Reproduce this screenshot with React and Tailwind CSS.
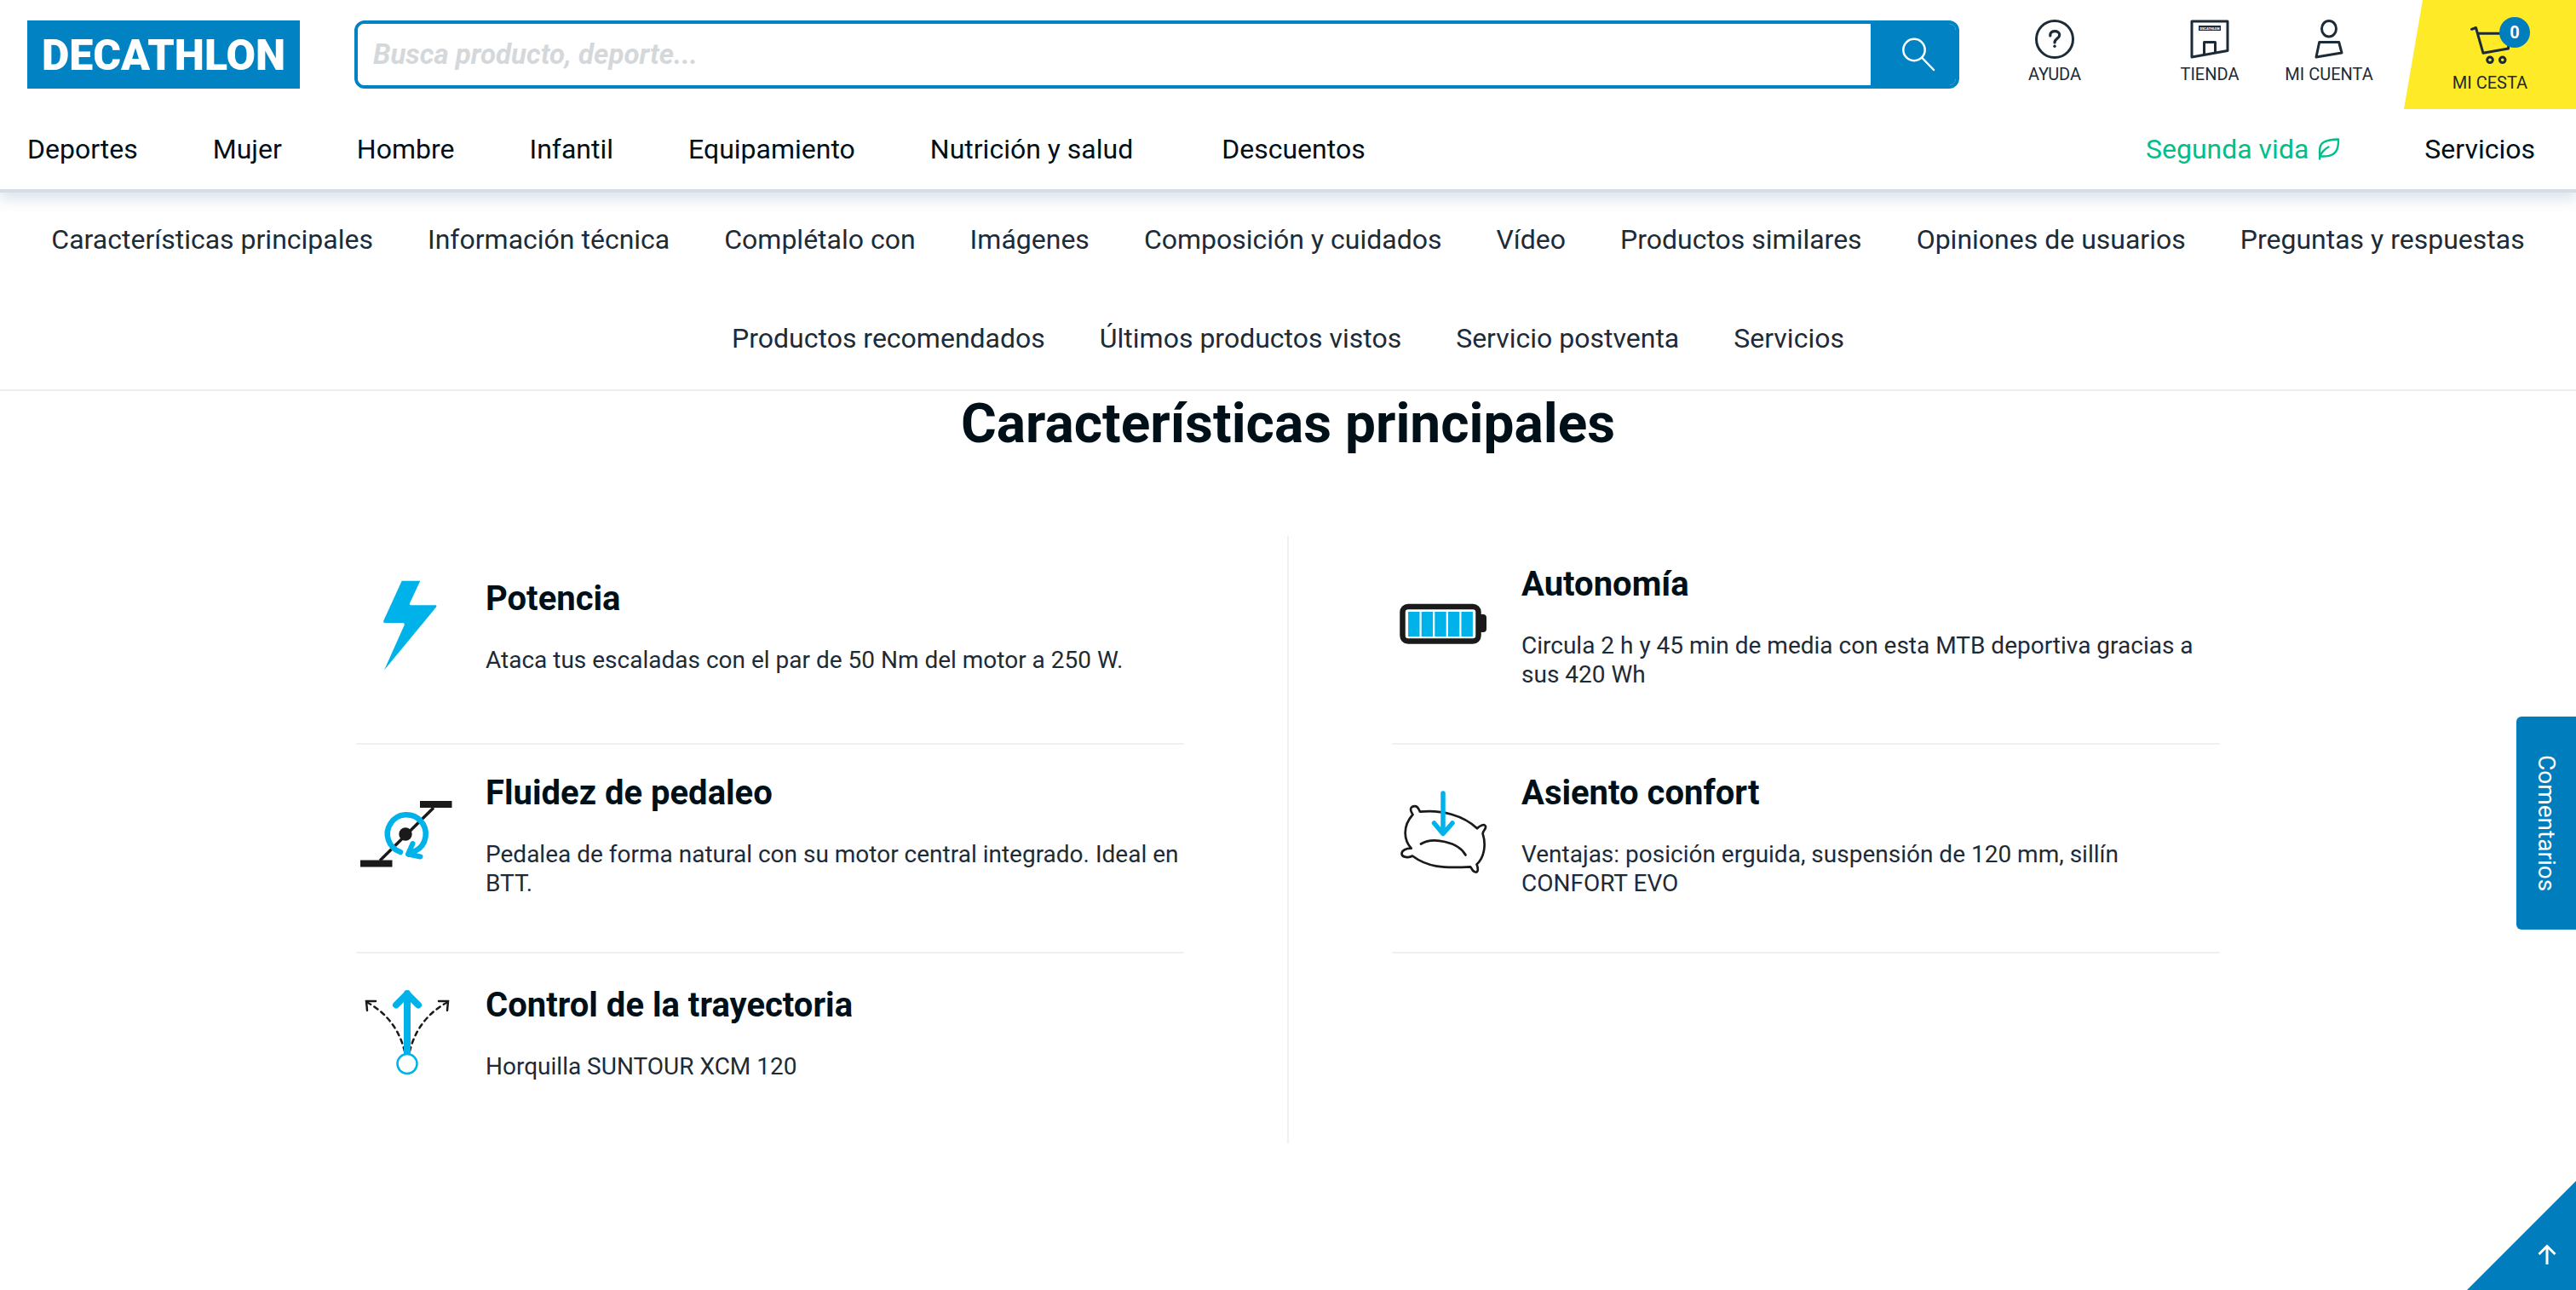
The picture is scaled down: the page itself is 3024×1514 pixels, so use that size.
import React from "react";

const BLUE = "#00b2ea";
const INK = "#1a1a1a";

const mainLinks = ["Deportes", "Mujer", "Hombre", "Infantil", "Equipamiento", "Nutrición y salud"];

const sectionLinks = [
  "Características principales",
  "Información técnica",
  "Complétalo con",
  "Imágenes",
  "Composición y cuidados",
  "Vídeo",
  "Productos similares",
  "Opiniones de usuarios",
  "Preguntas y respuestas",
  "Productos recomendados",
  "Últimos productos vistos",
  "Servicio postventa",
  "Servicios",
];

function HelpIcon() {
  return (
    <svg className="size-12" viewBox="0 0 48 48" fill="none" stroke="currentColor" strokeWidth="3" strokeLinecap="round" aria-hidden="true">
      <circle cx="24" cy="24" r="21.5" />
      <path d="M18.8 20v-1.2c0-5.6 10.9-5.6 10.9 0.2 0 4.5-5.7 4.2-5.7 9" strokeWidth="3.2" />
      <circle cx="24" cy="32.3" r="1.7" fill="currentColor" stroke="none" />
    </svg>
  );
}

function StoreIcon() {
  return (
    <svg className="size-12" viewBox="0 0 48 48" fill="none" stroke="currentColor" strokeWidth="3" strokeLinejoin="round" aria-hidden="true">
      <path d="M3 3h42v34.5L3 45z" />
      <path d="M17.5 42V27.5h13V39.5" />
      <rect x="11" y="8" width="26" height="6" fill="currentColor" stroke="none" />
      <text x="24" y="13" textAnchor="middle" fill="#fff" stroke="none" className="font-['Roboto',sans-serif] text-[4px] font-black">
        DECATHLON
      </text>
    </svg>
  );
}

function AccountIcon() {
  return (
    <svg className="size-12" viewBox="0 0 48 48" fill="none" stroke="currentColor" strokeWidth="3" strokeLinejoin="round" aria-hidden="true">
      <ellipse cx="24" cy="11.7" rx="8.5" ry="9.3" />
      <path d="M12.7 27.5h23L39 40 9 45z" />
    </svg>
  );
}

function CartIcon() {
  return (
    <svg className="size-12" viewBox="0 0 48 48" fill="none" stroke="currentColor" strokeWidth="3" strokeLinejoin="round" strokeLinecap="round" aria-hidden="true">
      <path d="M2.5 6.3l5-1.8L16 34.3 45.5 29 47 11.3H10" />
      <circle cx="24" cy="42.3" r="3.3" />
      <circle cx="38.7" cy="42.3" r="3.3" />
    </svg>
  );
}

function SearchIcon() {
  return (
    <svg className="size-10" viewBox="0 0 40 40" fill="none" stroke="currentColor" strokeWidth="2.5" strokeLinecap="round" aria-hidden="true">
      <circle cx="15" cy="14.5" r="12.7" />
      <path d="M24 23.5L38 38" />
    </svg>
  );
}

function LeafIcon() {
  return (
    <svg className="size-7" viewBox="0 0 28 28" fill="none" stroke="currentColor" strokeWidth="2.4" strokeLinecap="round" strokeLinejoin="round" aria-hidden="true">
      <path d="M3.2 25.5V15C3.2 6 10 3 25 2.5c.2 5-.2 10.5-3 14.5-3.5 4.8-9 5.5-18.5 5.5" />
      <path d="M3.5 22c2.5-5 5-8 10-10.5" />
    </svg>
  );
}

function BoltArt() {
  return (
    <svg className="size-[120px] shrink-0" viewBox="0 0 120 120" aria-hidden="true">
      <path
        d="M53.7 6.7H75.3L63 33q-1 2.2 1.5 2.2H93q2.2.3 1 2.3L33 111.5 56.5 59q1-3-1.5-3H33.5q-2-.3-1.2-2.5z"
        fill={BLUE}
      />
    </svg>
  );
}

function BatteryArt() {
  return (
    <svg className="size-[120px] shrink-0" viewBox="0 0 120 120" aria-hidden="true">
      <rect x="12.5" y="37" width="89" height="40.5" rx="6.5" fill="none" stroke={INK} strokeWidth="6.5" />
      <path d="M103 46h4q4 0 4 4v13q0 4-4 4h-4z" fill={INK} />
      {[19.1, 34.7, 50.3, 65.9, 81.5].map((x) => (
        <rect key={x} x={x} y="43" width="13.4" height="29" fill={BLUE} />
      ))}
    </svg>
  );
}

function CrankArt() {
  return (
    <svg className="size-[120px] shrink-0" viewBox="0 0 120 120" fill="none" aria-hidden="true">
      <path d="M91 28L28 90" stroke={INK} strokeWidth="3.5" />
      <path d="M75 20h37.5v8H75zM5 89.5h37.5v8H5z" fill={INK} />
      <path d="M52 80A22.5 22.5 0 1 1 70 78.5L62 82.5" stroke={BLUE} strokeWidth="6.5" strokeLinecap="round" strokeLinejoin="round" />
      <path d="M66.5 70L61 82.5 75.5 85.5" stroke={BLUE} strokeWidth="6" strokeLinecap="round" strokeLinejoin="round" />
      <circle cx="58" cy="59" r="7.7" fill={INK} />
    </svg>
  );
}

function CushionArt() {
  return (
    <svg className="size-[120px] shrink-0" viewBox="0 0 120 120" fill="none" strokeLinecap="round" strokeLinejoin="round" aria-hidden="true">
      <g stroke={INK} strokeWidth="2.7">
        <path d="M33 32.7C58 30 84 37 100 52.3C103 49 109 46 110 50C110.5 53 107 55 106.6 58.3C111 72 108 87 99.5 94.5C101 98 102 104 98 103.5C94 103 94 99 92 97.3C60 99 42 98 24 84.5C20 87 12 86.5 11.5 82C11.5 78 17 75.5 22.7 75.7C14 66 12 50 24.5 36C23 34 20.5 29 23.5 27C29 24.5 31 28 33 32.7Z" />
        <path d="M34 70.5C48 62 78 68 86.5 83.5" />
      </g>
      <path d="M60 11V58M49.5 46L60 58.5 71 46" stroke={BLUE} strokeWidth="5.5" />
    </svg>
  );
}

function TrajectoryArt() {
  return (
    <svg className="size-[120px] shrink-0" viewBox="0 0 120 120" fill="none" strokeLinecap="round" aria-hidden="true">
      <g stroke={INK} strokeWidth="2.5">
        <path d="M57 82C52 60 38 38 14 25M63 82C68 60 82 38 106 25" strokeDasharray="5 5" />
        <path d="M23 23H12L13 34M97 23H108L107 34" />
      </g>
      <path d="M60 14V86M47 27.5L60 14.5 73 27.5" stroke={BLUE} strokeWidth="8" strokeLinejoin="round" />
      <circle cx="60" cy="96.5" r="11.5" fill="#fff" stroke={BLUE} strokeWidth="2.5" />
    </svg>
  );
}

const features = [
  { art: BoltArt, title: "Potencia", text: "Ataca tus escaladas con el par de 50 Nm del motor a 250 W." },
  { art: BatteryArt, title: "Autonomía", text: "Circula 2 h y 45 min de media con esta MTB deportiva gracias a sus 420 Wh" },
  { art: CrankArt, title: "Fluidez de pedaleo", text: "Pedalea de forma natural con su motor central integrado. Ideal en BTT." },
  { art: CushionArt, title: "Asiento confort", text: "Ventajas: posición erguida, suspensión de 120 mm, sillín CONFORT EVO" },
  { art: TrajectoryArt, title: "Control de la trayectoria", text: "Horquilla SUNTOUR XCM 120", last: true },
];

function HeaderAction({ icon: Icon, label, className }) {
  return (
    <a href="#" className={"flex flex-col items-center gap-1 pt-[22px] text-[20px] leading-[26px] text-[#1d2b37] " + className}>
      <Icon />
      {label}
    </a>
  );
}

function Feature({ art: Art, title, text, last }) {
  return (
    <article className={"flex items-center gap-8 " + (last ? "pt-[33px] pb-16" : "border-b-2 border-[#f0f0f0] pt-8 pb-[63px]")}>
      <Art />
      <div className="flex flex-col gap-8 pt-0.5">
        <h3 className="text-[40px] leading-[46px] font-bold text-[#001018]">{title}</h3>
        <p className="text-[28px] leading-[34px] text-[#1d2b37]">{text}</p>
      </div>
    </article>
  );
}

export default function App() {
  return (
    <div className="min-h-screen bg-white font-['Roboto',sans-serif] text-[#001018]">
      <header className="relative z-10 bg-white shadow-[0_4px_0_#d7dde4,0_10px_16px_2px_rgba(0,83,125,0.15)]">
        <div className="flex h-32 items-start pl-8">
          <a href="#" className="mt-6 mr-16 flex h-20 w-80 shrink-0 items-center justify-center bg-[#0082c3] pt-0.5 text-[50px] leading-none font-black text-white">
            DECATHLON
          </a>
          <form className="mt-6 flex h-20 min-w-0 flex-1 overflow-hidden rounded-xl border-4 border-[#0082c3]" onSubmit={(e) => e.preventDefault()}>
            <input
              type="search"
              aria-label="Buscar"
              placeholder="Busca producto, deporte..."
              className="min-w-0 flex-1 bg-white px-[18px] text-[33px] font-bold italic outline-none placeholder:text-[#d5d8db]"
            />
            <button type="submit" aria-label="Buscar producto" className="flex w-[100px] items-center justify-center bg-[#0082c3] pl-3 text-white">
              <SearchIcon />
            </button>
          </form>
          <HeaderAction icon={HelpIcon} label="AYUDA" className="mx-14 w-28" />
          <HeaderAction icon={StoreIcon} label="TIENDA" className="w-[140px]" />
          <HeaderAction icon={AccountIcon} label="MI CUENTA" className="mr-[18px] w-[140px]" />
          <a
            href="#"
            className="relative flex h-32 w-[202px] flex-col items-center gap-2 bg-[#ffea28] pt-7 text-[20px] leading-[26px] text-[#1d2b37] [clip-path:polygon(22px_0,100%_0,100%_100%,0_100%)]"
          >
            <CartIcon />
            MI CESTA
            <span className="absolute top-5 right-[54px] flex size-9 items-center justify-center rounded-full bg-[#007dbc] text-[20px] font-bold text-white">
              0
            </span>
          </a>
        </div>
        <nav aria-label="Principal" className="flex h-[94px] items-center gap-[88px] pr-12 pl-8 text-[32px] whitespace-nowrap">
          {mainLinks.map((label) => (
            <a key={label} href="#">
              {label}
            </a>
          ))}
          <a href="#" className="ml-4">
            Descuentos
          </a>
          <a href="#" className="mr-2.5 ml-auto flex items-center gap-2.5 text-[#02be8a]">
            Segunda vida
            <LeafIcon />
          </a>
          <a href="#">Servicios</a>
        </nav>
      </header>

      <nav aria-label="Secciones" className="border-b-2 border-[#eeeeee] px-8 pt-px pb-0.5 text-[#1d2b37]">
        <ul className="flex flex-wrap justify-center gap-x-16 text-[32px] leading-[116px] whitespace-nowrap">
          {sectionLinks.map((label) => (
            <li key={label}>
              <a href="#">{label}</a>
            </li>
          ))}
        </ul>
      </nav>

      <main>
        <h2 className="text-center text-[64px] leading-[78px] font-bold">Características principales</h2>
        <section className="mx-auto mt-[92px] grid w-full max-w-[2188px] grid-cols-[1fr_2px_1fr] gap-x-[121px]">
          <div className="col-start-2 row-span-3 row-start-1 -mb-1.5 bg-[#f0f0f0]" />
          {features.map((feature) => (
            <Feature key={feature.title} {...feature} />
          ))}
        </section>
      </main>

      <button
        type="button"
        className="fixed right-0 bottom-[423px] flex h-[250px] w-[70px] items-center justify-center rounded-l-md bg-[#007dbc] text-[28px] text-white [writing-mode:vertical-rl]"
      >
        Comentarios
      </button>
      <a
        href="#"
        aria-label="Volver arriba"
        className="fixed right-0 bottom-0 flex size-32 items-end justify-end bg-[#007dbc] pr-[22px] pb-[30px] text-white [clip-path:polygon(100%_0,100%_100%,0_100%)]"
      >
        <svg className="size-6" viewBox="0 0 24 24" fill="none" stroke="currentColor" strokeWidth="3" aria-hidden="true">
          <path d="M12 24V3M2.5 12L12 2.5 21.5 12" />
        </svg>
      </a>
    </div>
  );
}
